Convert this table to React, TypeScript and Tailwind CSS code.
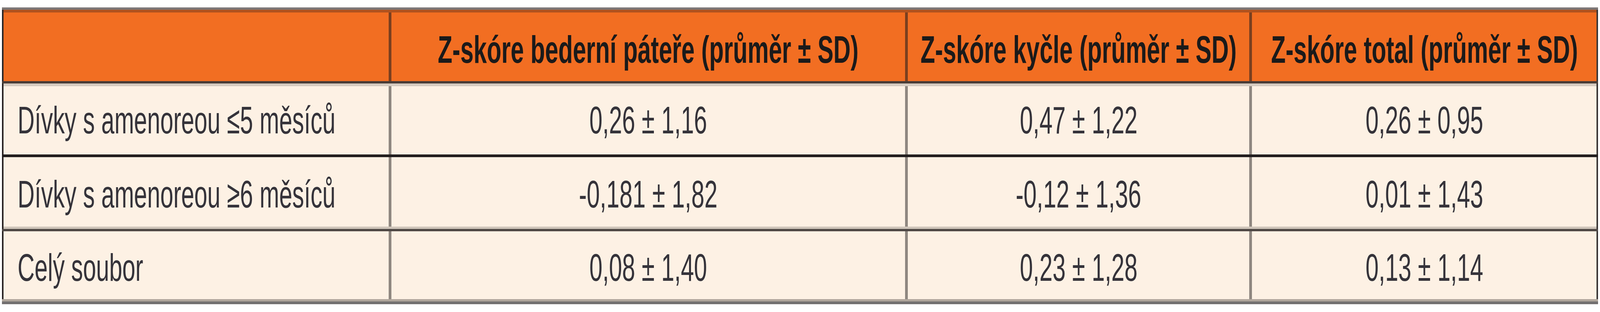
import { useEffect, useState } from 'react';

const rows = [
  { label: 'Dívky s amenoreou ≤5 měsíců', values: ['0,26 ± 1,16', '0,47 ± 1,22', '0,26 ± 0,95'], h: 'h-[175px]', pad: '' },
  { label: 'Dívky s amenoreou ≥6 měsíců', values: ['-0,181 ± 1,82', '-0,12 ± 1,36', '0,01 ± 1,43'], h: 'h-[178px]', pad: 'pt-[12px]' },
  { label: 'Celý soubor', values: ['0,08 ± 1,40', '0,23 ± 1,28', '0,13 ± 1,14'], h: 'h-[174px]', pad: 'pt-[12px]' },
];

const headers = [
  'Z-skóre bederní páteře (průměr ± SD)',
  'Z-skóre kyčle (průměr ± SD)',
  'Z-skóre total (průměr ± SD)',
];

// the table was laid out for a 5919px wide page
const DESIGN_WIDTH = 5919;

const cols = 'grid grid-cols-[minmax(0,1424fr)_minmax(0,1908fr)_minmax(0,1272fr)_minmax(0,1283fr)]';
const sides = 'border-l-[0.1014vw] border-r-[0.1014vw] border-l-[#2b2626] border-r-[#3c3838]';

const useSqueeze = () => {
  const [k, setK] = useState(() => (typeof window === 'undefined' ? 1 : window.innerWidth / DESIGN_WIDTH));
  useEffect(() => {
    const onResize = () => setK(window.innerWidth / DESIGN_WIDTH);
    onResize();
    window.addEventListener('resize', onResize);
    return () => window.removeEventListener('resize', onResize);
  }, []);
  return k;
};

type RowData = (typeof rows)[number];

const Row = ({ row, k }: { row: RowData; k: number }) => (
  <div className={`${cols} ${row.h}`}>
    <div className={`flex items-center pl-[0.895vw] text-[99px] text-[#35333a] whitespace-nowrap ${row.pad}`}>
      <span className="inline-block origin-left" style={{ transform: `scaleX(${0.88 * k})` }}>
        {row.label}
      </span>
    </div>
    {row.values.map((v) => (
      <div
        key={v}
        className={`flex items-center justify-center border-l-[0.186vw] border-[#8f8780] text-[99px] text-[#35333a] whitespace-nowrap ${row.pad}`}
      >
        <span className="inline-block" style={{ transform: `scaleX(${0.88 * k})` }}>
          {v}
        </span>
      </div>
    ))}
  </div>
);

const App = () => {
  const k = useSqueeze();

  return (
    <div className="w-full h-[800px] bg-white pt-[19px] px-[0.118vw] font-['Liberation_Sans',Arial,sans-serif]">
      <div className="w-full">
        {/* top rule */}
        <div className="h-[6px] bg-[#7d7776]" />

        {/* Header */}
        <div className={sides}>
          <div className={`${cols} h-[183px] bg-[#f26e22] border-t-[7px] border-t-[#b0521e]`}>
            <div />
            {headers.map((h) => (
              <div
                key={h}
                className="flex items-center justify-center pt-[15px] border-l-[0.186vw] border-l-[#7a3f1f] text-[99px] font-bold text-[#1b1a1a] whitespace-nowrap"
              >
                <span className="inline-block" style={{ transform: `scaleX(${0.89 * k})` }}>
                  {h}
                </span>
              </div>
            ))}
          </div>
        </div>
        <div className="h-[6px] bg-[#4a3c36]" />

        <div className={`${sides} bg-[#fdf1e4]`}>
          <div className="h-[7px] bg-[#d6cbc0]" />
          <Row row={rows[0]} k={k} />
        </div>
        <div className="h-[7px] bg-[#231f1f]" />

        <div className={`${sides} bg-[#fdf1e4]`}>
          <Row row={rows[1]} k={k} />
          <div className="h-[6px] bg-[#cfc5ba]" />
        </div>
        <div className="h-[6px] bg-[#4f4845]" />

        <div className={`${sides} bg-[#fdf1e4]`}>
          <Row row={rows[2]} k={k} />
        </div>

        {/* bottom rule */}
        <div className="h-[6px] bg-[#b0a69c]" />
        <div className="h-[7px] bg-[#737070]" />
      </div>
    </div>
  );
};

export default App;
